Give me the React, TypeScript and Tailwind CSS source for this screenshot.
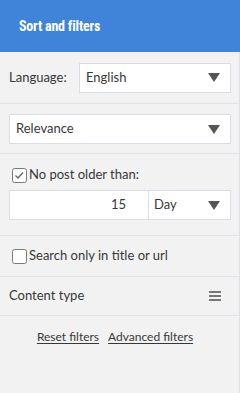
import React from "react";

const Arrow = () => (
  <svg width="12" height="9" viewBox="0 0 12 9" className="shrink-0">
    <polygon points="0,0 12,0 6,9" fill="#555555" />
  </svg>
);

const Check = ({ checked }: { checked?: boolean }) => (
  <svg width="15" height="15" viewBox="0 0 15 15" className="shrink-0">
    <rect x="0.5" y="0.5" width="14" height="14" rx="2" fill="#ffffff" stroke="#7a7a7a" />
    {checked && (
      <polyline points="3.5,7.5 6,10 11,4.5" fill="none" stroke="#666666" strokeWidth="1.4" />
    )}
  </svg>
);

export default function App() {
  const font = { fontFamily: "Lato, 'Open Sans', sans-serif" };
  return (
    <div className="w-[240px] h-[393px] flex flex-col text-[13px] text-[#383838]" style={font}>
      <div className="h-[52px] bg-[#3f84d8] flex items-center pl-[19px] shrink-0">
        <span
          className="text-white font-bold text-[14px] tracking-[-0.2px]"
          style={{ fontFamily: "'Liberation Sans Narrow', 'Roboto Condensed', Roboto, sans-serif" }}
        >
          Sort and filters
        </span>
      </div>
      <div className="flex-1 bg-[#f2f2f2] border-r border-[#dde2e8] flex flex-col">
        <div className="h-[52px] border-b border-[#dde2e8] flex items-center pl-[9px] pr-[8px]">
          <span className="w-[70px]">Language:</span>
          <div className="flex-1 h-[30px] bg-white border border-[#d9dee6] flex items-center pl-[6px] pr-[10px] justify-between">
            <span>English</span>
            <Arrow />
          </div>
        </div>
        <div className="h-[50px] border-b border-[#dde2e8] flex items-center px-[9px] pr-[8px] pt-[1px]">
          <div className="flex-1 h-[30px] bg-white border border-[#d9dee6] flex items-center pl-[6px] pr-[10px] justify-between">
            <span>Relevance</span>
            <Arrow />
          </div>
        </div>
        <div className="h-[82px] border-b border-[#dde2e8] flex flex-col pl-[9px] pr-[8px] pt-[12px]">
          <div className="h-[18px] flex items-center pl-[3px] gap-[2px]">
            <Check checked />
            <span>No post older than:</span>
          </div>
          <div className="mt-[6px] h-[30px] flex bg-white border border-[#d9dee6]">
            <div className="w-[139px] border-r border-[#d9dee6] flex items-center justify-end pr-[22px]">
              <span>15</span>
            </div>
            <div className="flex-1 flex items-center justify-between pl-[5px] pr-[10px]">
              <span>Day</span>
              <Arrow />
            </div>
          </div>
        </div>
        <div className="h-[41px] border-b border-[#dde2e8] flex items-center pl-[12px] gap-[2px]">
          <Check />
          <span>Search only in title or url</span>
        </div>
        <div className="h-[39px] border-b border-[#dde2e8] flex items-center justify-between pl-[9px] pr-[18px]">
          <span>Content type</span>
          <div className="w-[12px] flex flex-col gap-[2px]">
            <div className="h-[2px] bg-[#777777]" />
            <div className="h-[2px] bg-[#777777]" />
            <div className="h-[2px] bg-[#777777]" />
          </div>
        </div>
        <div className="flex justify-center gap-[9px] pt-[12px] pr-[9px] text-[12px]">
          <span className="underline underline-offset-2 leading-[18px]">Reset filters</span>
          <span className="underline underline-offset-2 leading-[18px]">Advanced filters</span>
        </div>
      </div>
    </div>
  );
}
